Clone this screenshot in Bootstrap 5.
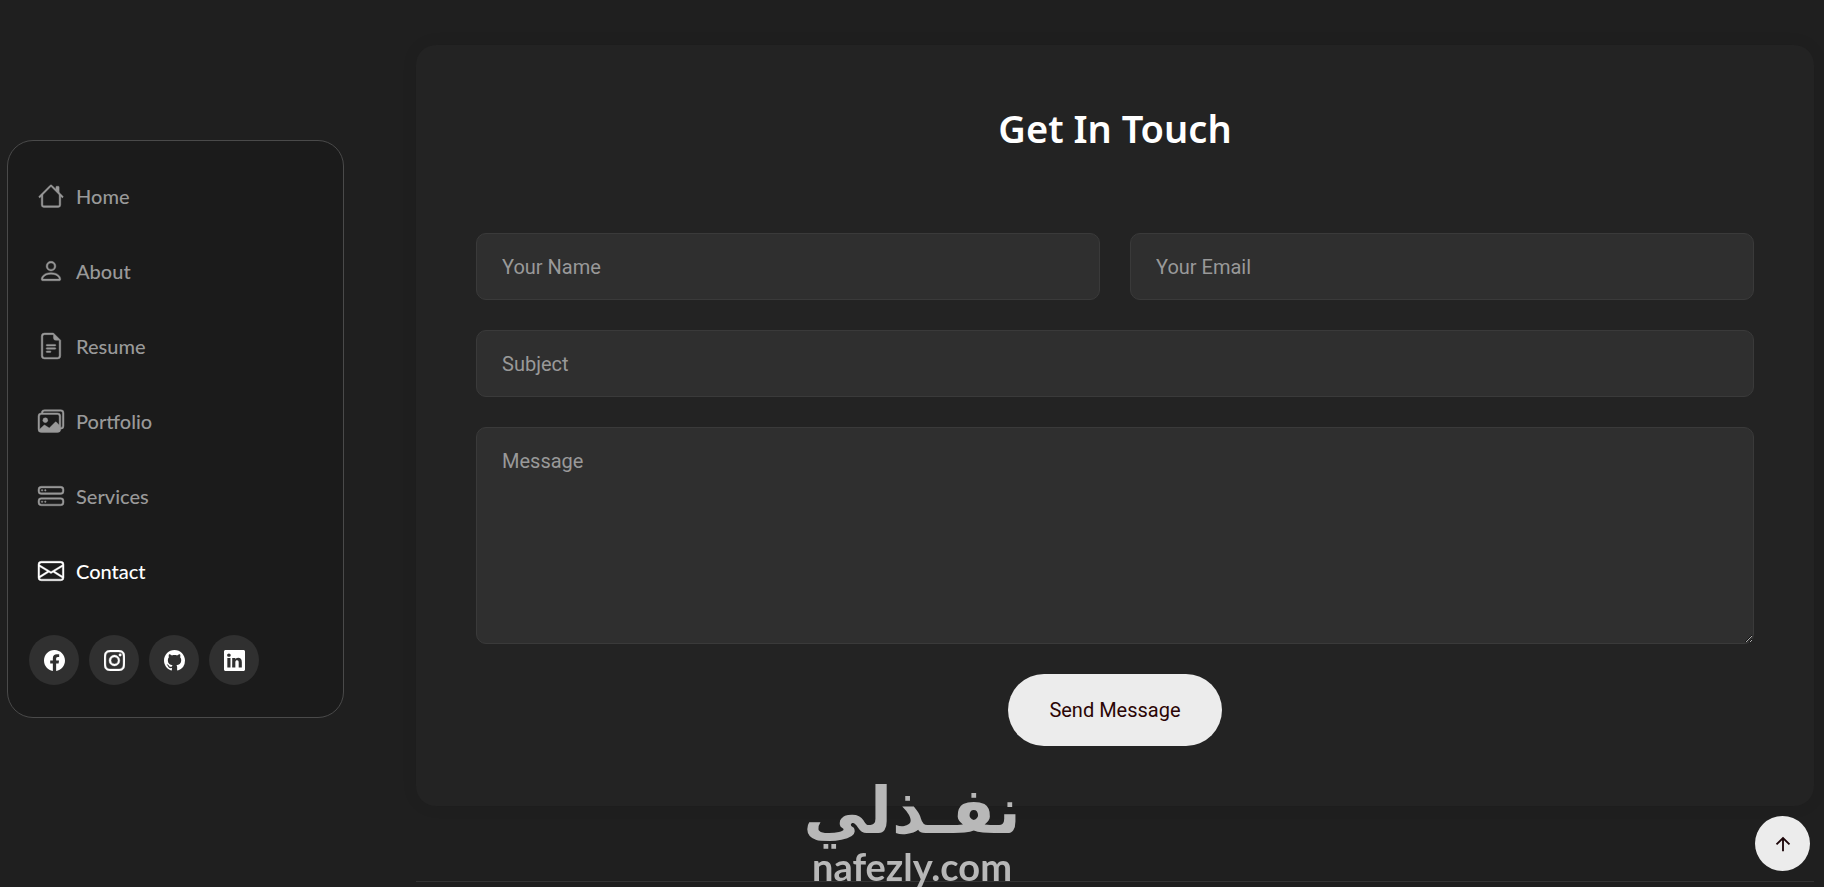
<!DOCTYPE html>
<html lang="en">
<head>
<meta charset="utf-8">
<meta name="viewport" content="width=device-width, initial-scale=1">
<title>Contact</title>
<link rel="stylesheet" href="https://cdn.jsdelivr.net/npm/bootstrap@5.3.0/dist/css/bootstrap.min.css">
<style>
  body { background: #1f1f1f; color: #fff; font-family: Roboto, sans-serif; font-size: 20px; min-height: 100vh; }
  .page-shell { padding: 45px 10px 0 7px; gap: 72px; }
  .side-panel { flex: 0 0 337px; margin-top: 95px; padding: 17px 21px 32px; background: #1b1b1b; border: 1px solid #4a4a4a; border-radius: 26px; }
  .side-panel .nav-link { height: 75px; padding: 0 9px; gap: 12px; color: #999; font-family: Lato, sans-serif; font-size: 20px; font-weight: 500; }
  .side-panel .nav-link.active { color: #fff; }
  .side-panel .nav-link svg { width: 26px; height: 26px; stroke: currentColor; stroke-width: .25; overflow: visible; }
  .social-row { gap: 10px; margin-top: 27px; }
  .social-row a { width: 50px; height: 50px; background: #303030; color: #fff; }
  .social-row svg { width: 21px; height: 21px; }
  .contact-panel { padding: 60px; background: #232323; border-radius: 20px; box-shadow: 0 0 16px rgba(0, 0, 0, .08); }
  .contact-panel h1 { font-family: "Noto Sans", sans-serif; font-size: 38px; line-height: 46px; font-weight: 600; margin-bottom: 82px; }
  .contact-panel .row { --bs-gutter-x: 30px; --bs-gutter-y: 30px; }
  .contact-panel .form-control { height: 67px; padding: 18px 25px; background: #2f2f2f; color: #fff; border: 1px solid #3a3a3a; border-radius: 10px; font-size: 20px; line-height: 30px; }
  .contact-panel textarea.form-control { height: 217px; }
  .contact-panel .form-control::placeholder { color: #999; }
  .send-btn { height: 72px; padding: 0 41px; background: #ececec; color: #2b0505; font-size: 20px; }
  .section-end { margin-top: 75px; border-top: 1px solid #333; }
  .to-top { width: 55px; height: 55px; right: 14px; bottom: 16px; background: #ececec; color: #1c0508; }
  .to-top svg { width: 22px; height: 22px; }
  .site-mark { left: 0; right: 0; bottom: 0; color: #b8b8b8; pointer-events: none; }
  .mark-ar { font-family: "DejaVu Sans", sans-serif; font-size: 64px; line-height: 68px; font-weight: 700; }
  .mark-en { font-family: Lato, sans-serif; font-size: 38px; line-height: 42px; font-weight: 700; }
</style>
<script src="https://cdn.jsdelivr.net/npm/bootstrap@5.3.0/dist/js/bootstrap.bundle.min.js"></script>
</head>
<body>
<div class="page-shell d-flex align-items-start">
  <aside class="side-panel">
    <nav class="nav flex-column">
      <a class="nav-link d-flex align-items-center" href="#home">
        <svg viewBox="0 0 16 16" fill="currentColor" aria-hidden="true"><path fill-rule="evenodd" d="M2 13.5V7h1v6.5a.5.5 0 0 0 .5.5h9a.5.5 0 0 0 .5-.5V7h1v6.5a1.5 1.5 0 0 1-1.5 1.5h-9A1.5 1.5 0 0 1 2 13.5zm11-11V6l-2-2V2.5a.5.5 0 0 1 .5-.5h1a.5.5 0 0 1 .5.5z"/><path fill-rule="evenodd" d="M7.293 1.5a1 1 0 0 1 1.414 0l6.647 6.646a.5.5 0 0 1-.708.708L8 2.207 1.354 8.854a.5.5 0 1 1-.708-.708L7.293 1.5z"/></svg>
        <span>Home</span></a>
      <a class="nav-link d-flex align-items-center" href="#about">
        <svg viewBox="0 0 16 16" fill="currentColor" aria-hidden="true"><path d="M8 8a3 3 0 1 0 0-6 3 3 0 0 0 0 6zm2-3a2 2 0 1 1-4 0 2 2 0 0 1 4 0zm4 8c0 1-1 1-1 1H3s-1 0-1-1 1-4 6-4 6 3 6 4zm-1-.004c-.001-.246-.154-.986-.832-1.664C11.516 10.68 10.289 10 8 10c-2.29 0-3.516.68-4.168 1.332-.678.678-.83 1.418-.832 1.664h10z"/></svg>
        <span>About</span></a>
      <a class="nav-link d-flex align-items-center" href="#resume">
        <svg viewBox="0 0 16 16" fill="currentColor" aria-hidden="true"><path d="M5.5 7a.5.5 0 0 0 0 1h5a.5.5 0 0 0 0-1h-5zM5 9.500a.5.5 0 0 1 .5-.5h5a.5.5 0 0 1 0 1h-5a.5.5 0 0 1-.5-.5zm0 2a.5.5 0 0 1 .5-.5h2a.5.5 0 0 1 0 1h-2a.5.5 0 0 1-.5-.5z"/><path d="M9.500 0H4a2 2 0 0 0-2 2v12a2 2 0 0 0 2 2h8a2 2 0 0 0 2-2V4.500L9.500 0zm0 1v2A1.500 1.500 0 0 0 11 4.500h2V14a1 1 0 0 1-1 1H4a1 1 0 0 1-1-1V2a1 1 0 0 1 1-1h5.500z"/></svg>
        <span>Resume</span></a>
      <a class="nav-link d-flex align-items-center" href="#portfolio">
        <svg viewBox="0 0 16 16" fill="currentColor" aria-hidden="true"><path d="M4.502 9a1.500 1.500 0 1 0 0-3 1.500 1.500 0 0 0 0 3z"/><path d="M14.002 13a2 2 0 0 1-2 2h-10a2 2 0 0 1-2-2V5A2 2 0 0 1 2 3a2 2 0 0 1 2-2h10a2 2 0 0 1 2 2v8a2 2 0 0 1-1.998 2zM14 2H4a1 1 0 0 0-1 1h9.002a2 2 0 0 1 2 2v7A1 1 0 0 0 15 11V3a1 1 0 0 0-1-1zM2.002 4a1 1 0 0 0-1 1v8l2.646-2.354a.5.5 0 0 1 .63-.062l2.660 1.773 3.710-3.710a.5.5 0 0 1 .577-.094l1.777 1.947V5a1 1 0 0 0-1-1h-10z"/></svg>
        <span>Portfolio</span></a>
      <a class="nav-link d-flex align-items-center" href="#services">
        <svg viewBox="0 0 16 16" fill="currentColor" aria-hidden="true"><path d="M14 10a1 1 0 0 1 1 1v1a1 1 0 0 1-1 1H2a1 1 0 0 1-1-1v-1a1 1 0 0 1 1-1h12zM2 9a2 2 0 0 0-2 2v1a2 2 0 0 0 2 2h12a2 2 0 0 0 2-2v-1a2 2 0 0 0-2-2H2z"/><path d="M5 11.500a.5.5 0 1 1-1 0 .5.5 0 0 1 1 0zm-2 0a.5.5 0 1 1-1 0 .5.5 0 0 1 1 0zM14 3a1 1 0 0 1 1 1v1a1 1 0 0 1-1 1H2a1 1 0 0 1-1-1V4a1 1 0 0 1 1-1h12zM2 2a2 2 0 0 0-2 2v1a2 2 0 0 0 2 2h12a2 2 0 0 0 2-2V4a2 2 0 0 0-2-2H2z"/><path d="M5 4.500a.5.5 0 1 1-1 0 .5.5 0 0 1 1 0zm-2 0a.5.5 0 1 1-1 0 .5.5 0 0 1 1 0z"/></svg>
        <span>Services</span></a>
      <a class="nav-link active d-flex align-items-center" href="#contact" aria-current="page">
        <svg viewBox="0 0 16 16" fill="currentColor" aria-hidden="true"><path d="M0 4a2 2 0 0 1 2-2h12a2 2 0 0 1 2 2v8a2 2 0 0 1-2 2H2a2 2 0 0 1-2-2V4zm2-1a1 1 0 0 0-1 1v.217l7 4.200 7-4.200V4a1 1 0 0 0-1-1H2zm13 2.383-4.708 2.825L15 11.105V5.383zm-.034 6.876-5.640-3.471L8 9.583l-1.326-.795-5.640 3.470A1 1 0 0 0 2 13h12a1 1 0 0 0 .966-.741zM1 11.105l4.708-2.897L1 5.383v5.722z"/></svg>
        <span>Contact</span></a>
    </nav>
    <div class="social-row d-flex">
      <a class="rounded-circle d-flex align-items-center justify-content-center" href="#facebook" aria-label="Facebook">
        <svg viewBox="0 0 16 16" fill="currentColor"><path d="M16 8.049c0-4.446-3.582-8.050-8-8.050C3.580 0-.002 3.603-.002 8.050c0 4.017 2.926 7.347 6.750 7.951v-5.625h-2.030V8.050H6.750V6.275c0-2.017 1.195-3.131 3.022-3.131.876 0 1.791.157 1.791.157v1.980h-1.009c-.993 0-1.303.621-1.303 1.258v1.510h2.218l-.354 2.326H9.250V16c3.824-.604 6.750-3.934 6.750-7.951z"/></svg></a>
      <a class="rounded-circle d-flex align-items-center justify-content-center" href="#instagram" aria-label="Instagram">
        <svg viewBox="0 0 16 16" fill="currentColor" stroke="currentColor" stroke-width=".3"><path d="M8 0C5.829 0 5.556.010 4.703.048 3.850.088 3.269.222 2.760.420a3.917 3.917 0 0 0-1.417.923A3.927 3.927 0 0 0 .420 2.760C.222 3.268.087 3.850.048 4.700.010 5.555 0 5.827 0 8.001c0 2.172.010 2.444.048 3.297.040.852.174 1.433.372 1.942.205.526.478.972.923 1.417.444.445.890.719 1.416.923.510.198 1.090.333 1.942.372C5.555 15.990 5.827 16 8 16s2.444-.010 3.298-.048c.851-.040 1.434-.174 1.943-.372a3.916 3.916 0 0 0 1.416-.923c.445-.445.718-.891.923-1.417.197-.509.332-1.090.372-1.942C15.990 10.445 16 10.173 16 8s-.010-2.445-.048-3.299c-.040-.851-.175-1.433-.372-1.941a3.926 3.926 0 0 0-.923-1.417A3.911 3.911 0 0 0 13.240.420c-.510-.198-1.092-.333-1.943-.372C10.443.010 10.172 0 7.998 0h.003zm-.717 1.442h.718c2.136 0 2.389.007 3.232.046.780.035 1.204.166 1.486.275.373.145.640.319.920.599.280.280.453.546.598.920.110.281.240.705.275 1.485.039.843.047 1.096.047 3.231s-.008 2.389-.047 3.232c-.035.780-.166 1.203-.275 1.485a2.470 2.470 0 0 1-.599.919c-.280.280-.546.453-.920.598-.280.110-.704.240-1.485.276-.843.038-1.096.047-3.232.047s-2.390-.009-3.233-.047c-.780-.036-1.203-.166-1.485-.276a2.478 2.478 0 0 1-.920-.598 2.480 2.480 0 0 1-.600-.920c-.109-.281-.240-.705-.275-1.485-.038-.843-.046-1.096-.046-3.233 0-2.136.008-2.388.046-3.231.036-.780.166-1.204.276-1.486.145-.373.319-.640.599-.920.280-.280.546-.453.920-.598.282-.110.705-.240 1.485-.276.738-.034 1.024-.044 2.515-.045v.002zm4.988 1.328a.960.960 0 1 0 0 1.920.960.960 0 0 0 0-1.920zm-4.270 1.122a4.109 4.109 0 1 0 0 8.217 4.109 4.109 0 0 0 0-8.217zm0 1.441a2.667 2.667 0 1 1 0 5.334 2.667 2.667 0 0 1 0-5.334z"/></svg></a>
      <a class="rounded-circle d-flex align-items-center justify-content-center" href="#github" aria-label="GitHub">
        <svg viewBox="0 0 16 16" fill="currentColor"><path d="M8 0C3.580 0 0 3.580 0 8c0 3.540 2.290 6.530 5.470 7.590.4.070.55-.17.55-.38 0-.19-.01-.82-.01-1.490-2.010.370-2.530-.490-2.690-.940-.090-.230-.480-.940-.820-1.130-.280-.150-.680-.520-.010-.530.630-.010 1.080.580 1.230.820.720 1.210 1.870.870 2.330.660.070-.520.280-.870.510-1.070-1.780-.200-3.640-.890-3.640-3.950 0-.870.310-1.590.820-2.150-.080-.200-.360-1.020.080-2.120 0 0 .670-.210 2.200.820.640-.180 1.320-.270 2-.270.680 0 1.360.090 2 .270 1.530-1.040 2.200-.820 2.200-.820.440 1.100.160 1.920.080 2.120.510.560.820 1.270.820 2.150 0 3.070-1.870 3.750-3.650 3.950.290.250.540.730.540 1.480 0 1.070-.010 1.930-.010 2.200 0 .210.150.460.550.380A8.012 8.012 0 0 0 16 8c0-4.420-3.580-8-8-8z"/></svg></a>
      <a class="rounded-circle d-flex align-items-center justify-content-center" href="#linkedin" aria-label="LinkedIn">
        <svg viewBox="0 0 16 16" fill="currentColor"><path d="M0 1.146C0 .513.526 0 1.175 0h13.650C15.474 0 16 .513 16 1.146v13.708c0 .633-.526 1.146-1.175 1.146H1.175C.526 16 0 15.487 0 14.854V1.146zm4.943 12.248V6.169H2.542v7.225h2.401zm-1.200-8.212c.837 0 1.358-.554 1.358-1.248-.015-.709-.520-1.248-1.342-1.248-.822 0-1.359.540-1.359 1.248 0 .694.521 1.248 1.327 1.248h.016zm4.908 8.212V9.359c0-.216.016-.432.080-.586.173-.431.568-.878 1.232-.878.869 0 1.216.662 1.216 1.634v3.865h2.401V9.250c0-2.220-1.184-3.252-2.764-3.252-1.274 0-1.845.700-2.165 1.193v.025h-.016a5.540 5.540 0 0 1 .016-.025V6.169h-2.400c.030.678 0 7.225 0 7.225h2.400z"/></svg></a>
    </div>
  </aside>

  <main class="flex-grow-1">
    <section class="contact-panel" id="contact">
      <h1 class="text-center">Get In Touch</h1>
      <form>
        <div class="row">
          <div class="col-md-6"><input class="form-control" type="text" placeholder="Your Name" aria-label="Your Name"></div>
          <div class="col-md-6"><input class="form-control" type="email" placeholder="Your Email" aria-label="Your Email"></div>
          <div class="col-12"><input class="form-control" type="text" placeholder="Subject" aria-label="Subject"></div>
          <div class="col-12"><textarea class="form-control" placeholder="Message" aria-label="Message"></textarea></div>
          <div class="col-12 text-center"><button class="btn send-btn rounded-pill border-0" type="submit">Send Message</button></div>
        </div>
      </form>
    </section>
    <div class="section-end"></div>
  </main>
</div>

<div class="site-mark position-fixed text-center">
  <div class="mark-ar" lang="ar" dir="rtl">نفـذلي</div>
  <div class="mark-en">nafezly.com</div>
</div>
<button class="to-top btn position-fixed rounded-circle border-0 p-0 d-flex align-items-center justify-content-center" type="button" aria-label="Back to top">
  <svg viewBox="0 0 24 24" fill="currentColor"><path d="M13 7.828V20h-2V7.828l-5.364 5.364-1.414-1.414L12 4l7.778 7.778-1.414 1.414z"/></svg>
</button>
</body>
</html>
